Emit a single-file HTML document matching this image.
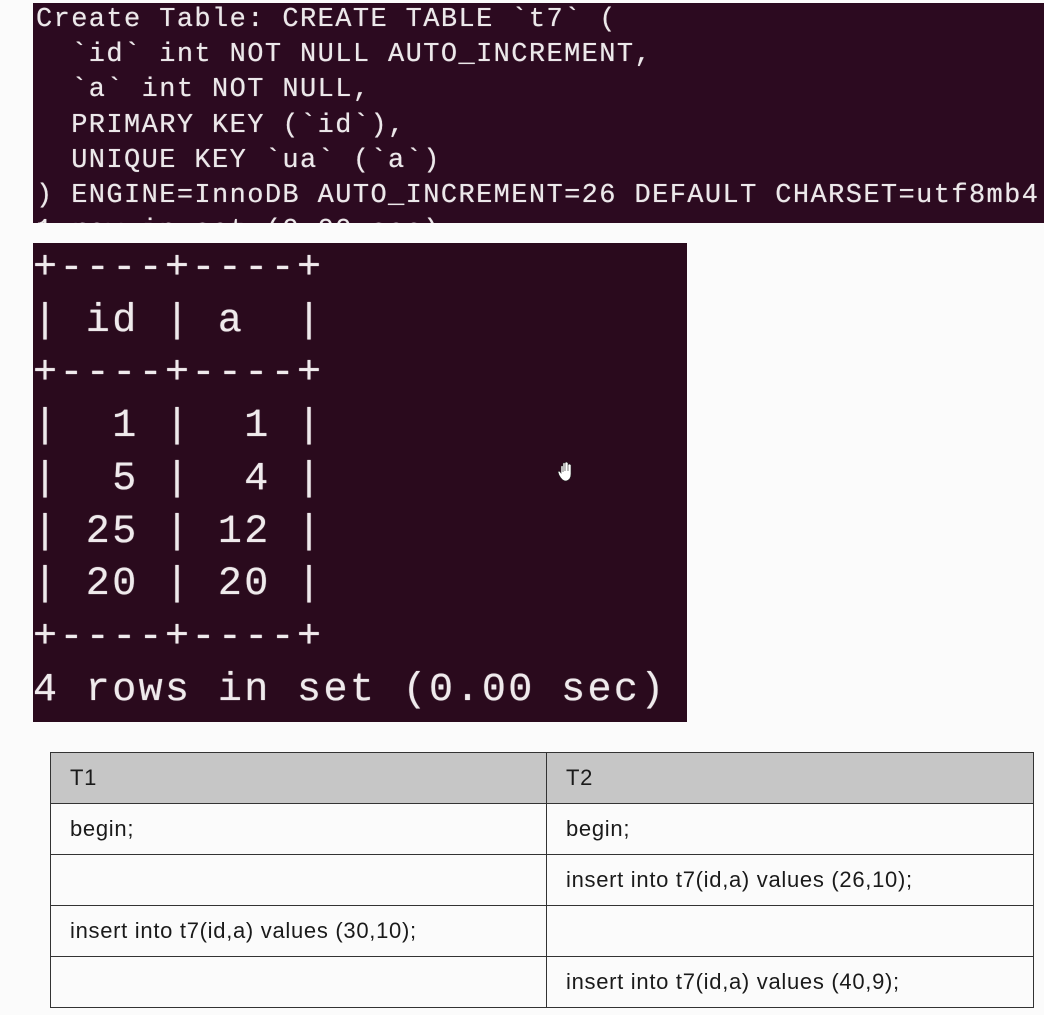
<!DOCTYPE html>
<html><head><meta charset="utf-8"><style>
html,body{margin:0;padding:0;background:#fbfbfb;width:1044px;height:1015px;overflow:hidden;position:relative;font-family:"Liberation Sans",sans-serif}
.t1{position:absolute;left:33px;top:3px;width:1011px;height:220px;background:#2c0a20;overflow:hidden}
.t1 pre{margin:0;position:absolute;left:3px;top:0px;font-family:"Liberation Mono",monospace;font-size:27px;letter-spacing:1.4px;line-height:35.2px;color:#ece8ea;text-shadow:0 0 0.6px #ece8ea}
.t2{position:absolute;left:33px;top:243px;width:654px;height:479px;background:#2a0a1d;overflow:hidden}
.t2 pre{margin:0;position:absolute;left:0;top:0;font-family:"Liberation Mono",monospace;font-size:40px;letter-spacing:2.4px;line-height:52.7px;color:#efeaec;text-shadow:0 0 0.8px #efeaec}
table{position:absolute;left:50px;top:752px;border-collapse:collapse;width:984px;font-size:22px;letter-spacing:0.7px;color:#1a1a1a;table-layout:fixed}
td{border:1.5px solid #333;height:50px;padding:0 0 0 19px;vertical-align:middle}
tr.h td{background:#c6c6c6}
.hand{position:absolute;left:524px;top:218px}
</style></head><body>
<div class="t1"><pre>Create Table: CREATE TABLE `t7` (
  `id` int NOT NULL AUTO_INCREMENT,
  `a` int NOT NULL,
  PRIMARY KEY (`id`),
  UNIQUE KEY `ua` (`a`)
) ENGINE=InnoDB AUTO_INCREMENT=26 DEFAULT CHARSET=utf8mb4
1 row in set (0.00 sec)</pre></div>
<div class="t2"><pre>+----+----+
| id | a  |
+----+----+
|  1 |  1 |
|  5 |  4 |
| 25 | 12 |
| 20 | 20 |
+----+----+
4 rows in set (0.00 sec)</pre>
<svg class="hand" width="20" height="22" viewBox="0 0 20 22"><path d="M4 12 L4 6 Q4 4 6 5 L6 11 L6 3 Q6 1 8 2 L8 10 L8 2 Q9 0 11 2 L11 10 L11 4 Q12 2 14 4 L14 13 Q14 19 9 20 Q5 20 2 14 L1 11 Q2 9 4 12 Z" fill="#fff" stroke="#222" stroke-width="0.6"/></svg></div>
<table>
<colgroup><col style="width:496px"><col></colgroup>
<tr class="h"><td>T1</td><td>T2</td></tr>
<tr><td>begin;</td><td>begin;</td></tr>
<tr><td></td><td>insert into t7(id,a) values (26,10);</td></tr>
<tr><td>insert into t7(id,a) values (30,10);</td><td></td></tr>
<tr><td></td><td>insert into t7(id,a) values (40,9);</td></tr>
</table>
</body></html>
